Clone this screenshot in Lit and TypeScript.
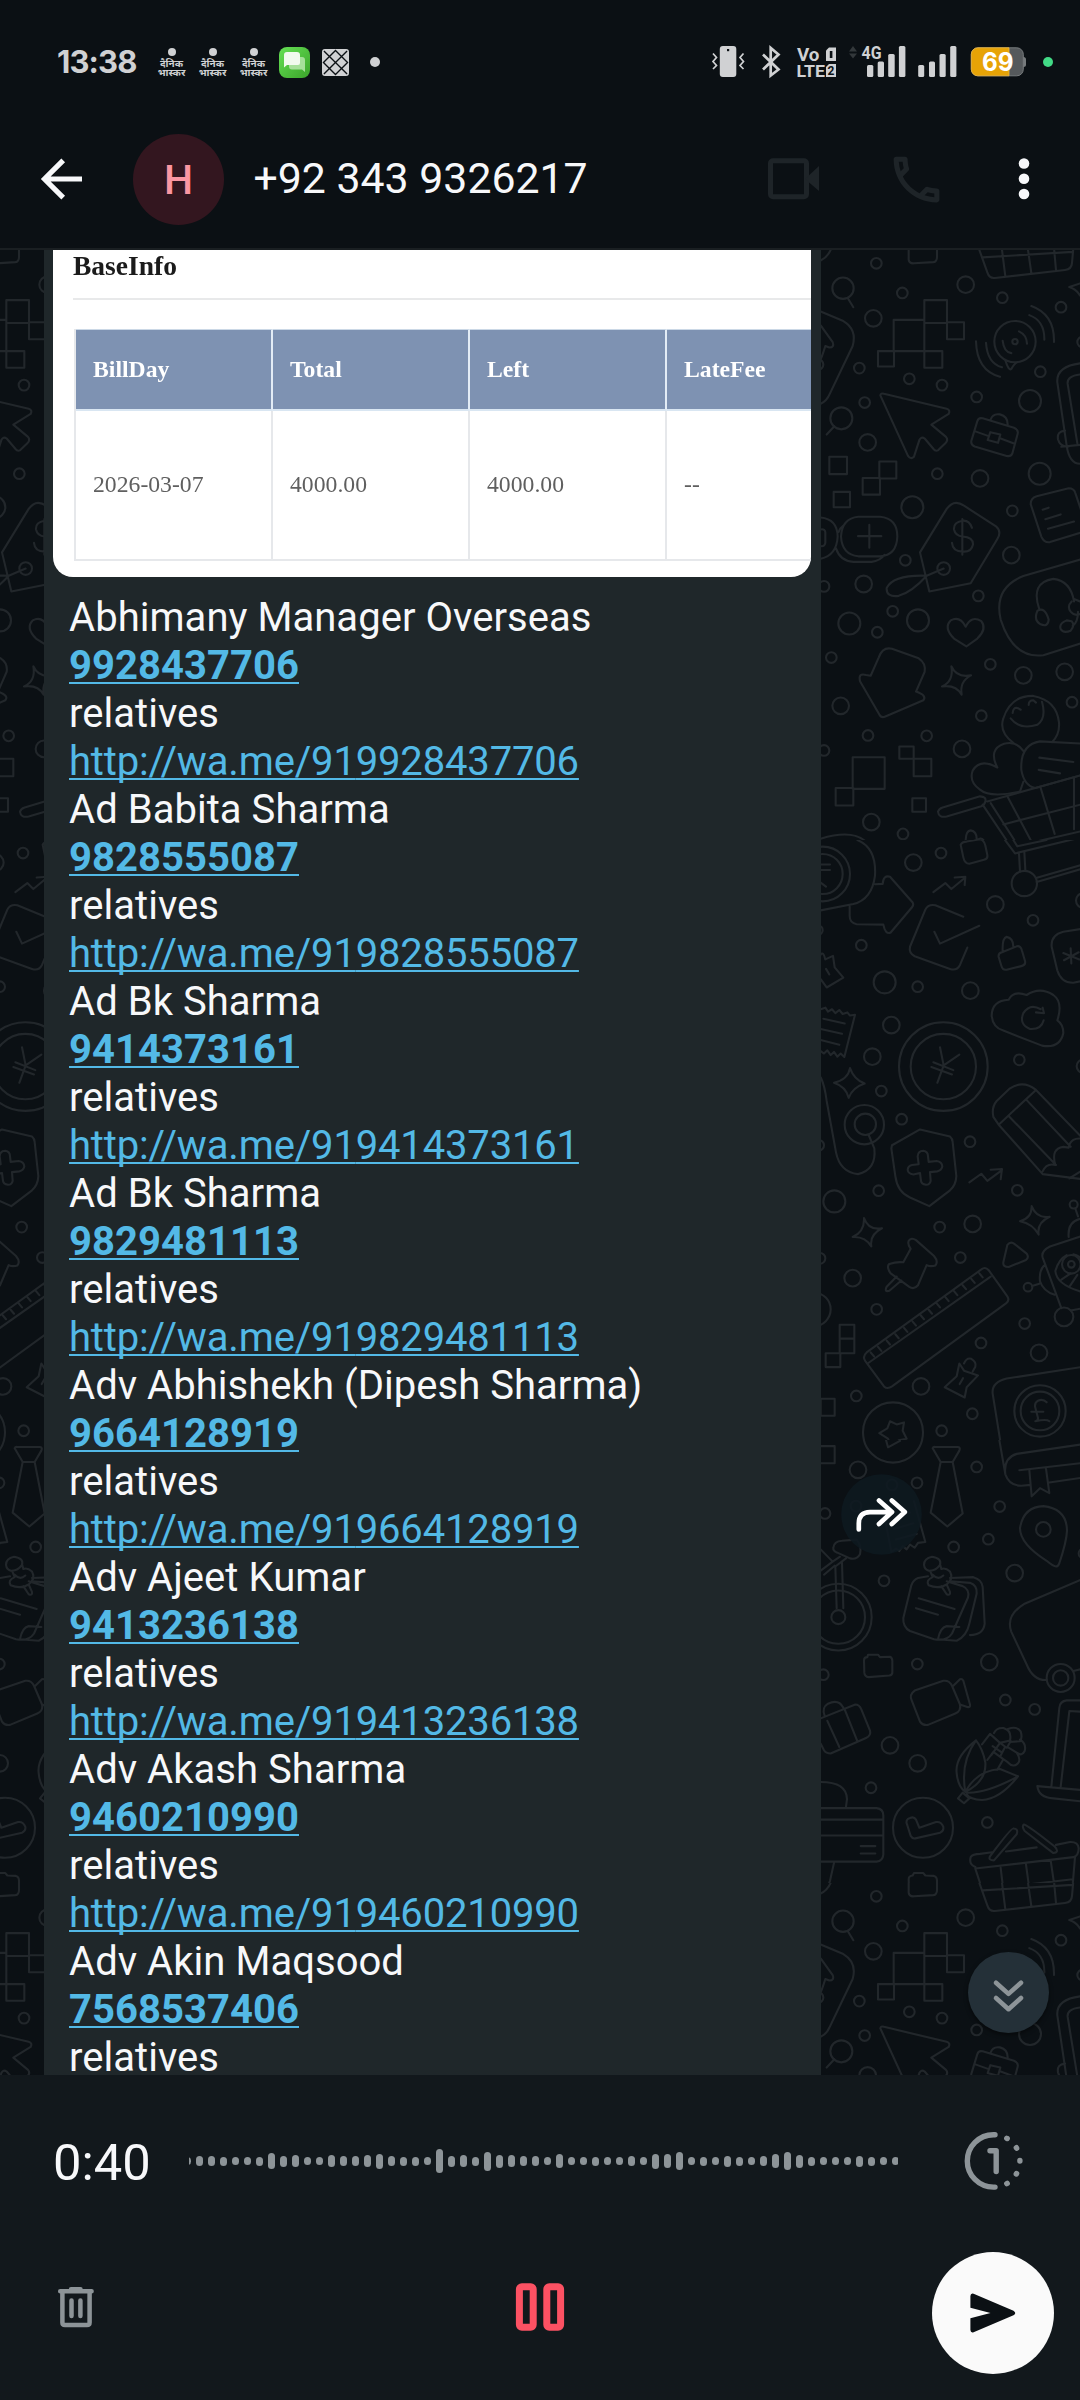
import { LitElement, html, css, svg } from "lit";
import { customElement } from "lit/decorators.js";

type Dot = [number, number, number];

/* ---------- wallpaper doodles: three bands of one repeating tile ---------- */

const TILE_W = 918;
const TILE_H = 1633;

const bandADots: Dot[] = [
  [229, 59, 16], [497, 113, 25], [307, 134, 16], [607, 146, 16], [220, 198, 25], [783, 170, 16],
  [178, 324, 16], [328, 351, 16], [426, 367, 16], [194, 411, 16], [203, 512, 25], [530, 397, 16],
  [721, 333, 16], [690, 407, 33], [719, 591, 33], [412, 591, 16], [540, 603, 25], [337, 676, 33],
  [637, 685, 16], [634, 797, 25], [316, 810, 16], [191, 870, 25], [72, 876, 16], [278, 939, 16],
  [354, 962, 33], [148, 970, 33], [232, 992, 16], [535, 900, 16], [94, 1056, 16], [571, 1073, 16],
  [670, 1101, 25], [794, 1092, 25], [122, 1178, 25], [816, 1169, 16], [544, 1203, 16], [204, 1253, 16],
  [380, 1254, 16], [486, 1287, 25], [72, 1291, 16], [214, 1472, 25], [309, 1502, 16], [848, 258, 16],
  [129, 122, 32], [124, 451, 33], [431, 831, 19], [645, 257, 62], [54, 315, 16], [645, 257, 8],
];

const bandAPaths = [
  "M144 148L160 170M103 471L80 492",
  "M62 52Q82 44 92 25M326 20V50Q328 60 342 59L400 56Q412 55 411 40V20",
  "M538 25L562 82Q568 98 585 96L795 76Q815 74 816 58L820 20M548 44L818 30M606 25L616 92M684 25L694 84M762 20L768 76",
  "M840 110L808 119Q828 124 840 140",
  "M281 202H373V281H281ZM373 152H441V210H373ZM441 208H492V251H441ZM234 281H282V320H234ZM373 281H427V323H373ZM373 210V281",
  "M62 181L130 205Q172 226 158 268L90 388Q80 408 62 414M62 216L98 258Q104 272 88 272L76 268Q68 290 62 302",
  "M528 256Q530 330 600 346M558 260Q562 312 606 322M608 255Q612 284 634 286M688 190Q734 204 733 252M694 167Q764 188 762 258M657 231Q680 240 681 262M616 304Q626 332 634 326Q645 310 652 309",
  "M241 393Q242 386 252 389L440 427Q452 430 446 440L394 467L438 498Q446 506 436 514L414 532Q406 535 400 528L374 502Q364 496 358 506L342 548Q332 556 324 546Z",
  "M532 458Q536 448 548 451L642 475Q656 480 653 490L637 540Q632 549 620 546L524 522Q512 518 514 508ZM526 484L566 496M602 502L640 514M571 486L601 492L594 513L563 506ZM572 454Q578 438 600 441Q624 446 623 468",
  "M840 312Q768 320 772 360L800 520Q808 566 840 566M840 340Q800 344 803 364L832 514M784 523L840 518M795 482Q770 484 774 504Q780 524 806 522",
  "M88 548H141V592H88ZM101 637H150V676H101ZM238 560H289V603H238ZM188 602H240V644H188Z",
  "M175 700H240Q292 704 292 750Q290 798 240 800H175Q126 796 123 750Q126 704 175 700ZM208 720V778M174 749H244M62 702Q112 706 113 750Q110 798 62 806M62 732Q76 730 76 740V766Q74 776 62 774M108 780Q120 812 160 814H215Q240 812 254 796M116 738Q120 728 130 722",
  "M440 680Q462 654 492 672L588 724Q606 738 592 756L512 868L388 889L360 790ZM431 831L380 849Q280 846 260 880Q258 904 296 900Q336 890 380 849M516 728Q508 708 487 710Q460 714 462 732Q466 748 488 750Q520 752 519 770Q514 790 488 788Q458 788 456 766M487 706V796",
  "M692 668Q692 652 710 648L806 628Q822 628 826 640L850 700M692 668L724 750Q732 766 750 764L850 738M728 682L746 677M736 706L782 694M744 730L822 712",
  "M850 806L670 850Q580 880 602 960Q640 1060 730 1050L850 1018M718 934Q690 866 760 857Q812 862 822 914M712 938Q734 926 746 960Q744 980 722 972Q700 962 712 938ZM815 914Q800 926 812 940Q824 952 840 946M822 908L840 914M800 962Q776 970 782 984Q790 996 812 988Q826 974 815 964ZM818 976Q834 966 834 940",
  "M497 978Q480 950 452 962Q430 980 462 1008L499 1028L532 1008Q562 984 544 964Q514 948 497 978Z",
  "M236 1056Q248 1028 276 1034L356 1058Q378 1070 374 1092L348 1142Q382 1152 370 1164L256 1205Q244 1210 238 1200L180 1116Q174 1094 198 1100L212 1102Z",
  "M454 1078Q470 1108 513 1101Q478 1116 485 1150Q468 1124 426 1129Q462 1116 454 1078Z",
  "M640 1272Q596 1244 610 1210Q632 1152 700 1153Q770 1164 777 1220Q780 1250 756 1270M638 1196Q640 1180 654 1184L662 1188M686 1176Q686 1164 700 1164L708 1170M632 1210Q660 1240 712 1226Q740 1210 726 1168",
  "M592 1334Q564 1288 612 1274Q648 1266 670 1292M592 1334Q540 1310 518 1342Q506 1370 540 1390Q570 1412 660 1395L670 1370M850 1274L720 1268Q660 1276 664 1340Q672 1380 706 1386L850 1352M718 1309L820 1320M716 1340L780 1349",
  "M428 1435L540 1407Q560 1408 556 1420Q554 1428 544 1432L440 1458Q416 1462 414 1446Q416 1438 428 1435ZM548 1428L645 1550M572 1424L654 1532L850 1494M562 1420L850 1352M624 1410L696 1524M722 1386L764 1502M822 1360V1490M610 1478L850 1426",
  "M298 1281H341V1312H298ZM341 1312H394V1356H341ZM158 1308H254V1388H158ZM107 1386H160V1430H107ZM337 1412H378V1446H337Z",
  "M62 1514Q180 1484 214 1540M490 1540Q480 1528 500 1526L540 1514Q552 1512 556 1530M497 1524Q496 1494 512 1493Q530 1496 530 1514",
];

const bandBDots: Dot[] = [
  [340, 57, 25], [423, 33, 16], [586, 163, 25], [699, 203, 16], [184, 266, 16], [254, 360, 33],
  [353, 371, 16], [511, 381, 25], [274, 468, 25], [217, 548, 25], [244, 635, 16], [658, 556, 16],
  [305, 706, 16], [510, 763, 16], [56, 772, 16], [236, 887, 16], [103, 914, 33], [652, 886, 16],
  [419, 979, 16], [518, 971, 25], [481, 1056, 16], [60, 1058, 16], [158, 1108, 25], [230, 1187, 16],
  [543, 1272, 16], [674, 1223, 16], [717, 1297, 25], [363, 1382, 25], [169, 1406, 16], [517, 1451, 16],
  [425, 1494, 16], [850, 153, 22], [54, 228, 14], [850, 572, 20],
  [430, 573, 133], [430, 573, 98], [673, 110, 38], [68, 86, 82], [68, 86, 60], [193, 720, 59],
  [196, 719, 32], [279, 1498, 90], [720, 1444, 77], [720, 1444, 58], [792, 1206, 28], [814, 1073, 28],
  [814, 1073, 10], [684, 1131, 13], [821, 922, 12], [42, 1187, 50],
];

const bandBPaths = [
  "M172 0Q230 20 225 90Q216 150 160 162L62 178M62 62H90M62 76H90M62 108L78 118M225 112L248 111Q250 88 270 93L338 158Q342 164 336 170L272 234Q256 240 250 214L170 213Q148 210 149 190V168",
  "M400 132L436 109L454 124L494 96M464 95L496 93L494 114",
  "M490 194L406 165Q384 162 376 176L330 270Q326 286 344 294L450 326Q470 332 480 316L502 272M403 232L420 262L538 217",
  "M482 12Q486 4 500 4L540 -2Q552 0 556 14L562 38Q564 48 552 50L508 60Q494 60 490 44Z",
  "M615 0L645 34L850 -8M640 0L652 16L740 0M657 34L660 80M673 30L676 76M708 96L850 62M710 106L850 72",
  "M596 296Q594 286 606 284L650 269Q662 266 666 280L675 306Q678 316 664 319L620 328Q608 330 604 318ZM608 282Q606 248 620 245Q640 248 640 270",
  "M850 224L790 232Q752 240 755 270L772 330Q784 362 820 361L850 356M812 274L814 312M790 286L838 302M792 304L836 284",
  "M62 290Q70 280 76 302L99 293L104 322L130 348L80 373L62 352M78 326L88 340",
  "M62 428L76 424L84 434L96 428L106 438L118 430L128 440L142 436L150 444L165 442L133 549L122 540L112 548L102 536L92 544L82 532L72 540L62 534M70 452L134 464M62 478L126 490M62 506L118 518",
  "M626 404Q576 406 575 444Q578 474 610 482L726 520Q780 528 790 488Q790 466 772 456Q790 410 760 392Q720 370 680 392Q640 380 626 404ZM722 428Q690 412 670 438Q656 466 690 478Q724 480 731 456M708 436L732 438L728 424",
  "M150 577Q162 606 194 616Q158 626 146 652Q138 624 102 614Q144 606 150 577Z",
  "M420 524L431 570L478 543M431 570L412 614M400 562L460 582M394 574L456 593",
  "M62 600Q74 620 80 660L108 790Q120 840 174 845Q230 834 223 780L206 746",
  "M276 772L360 732L450 750Q458 756 458 764L469 850Q468 872 450 886L388 926L330 904Q292 890 286 850L274 780ZM353 800Q354 786 370 786Q384 788 384 800L386 814L410 812Q426 814 427 826Q424 836 412 838L390 840L392 862Q390 872 378 872Q364 870 363 862L360 842L340 846Q324 844 323 834Q324 824 336 822L356 820Z",
  "M508 866L544 844L562 862L604 836M572 834L606 832L602 858",
  "M850 756L708 632Q670 606 630 628L590 660Q574 676 580 700L596 720L728 845L850 858M596 720L708 632M626 698L768 822M678 656L812 776M728 838Q740 816 766 822Q752 780 790 776L806 778Q812 750 850 756M808 856L850 834",
  "M695 926Q710 958 749 953Q710 968 716 998Q698 970 660 964Q696 956 695 926ZM192 956Q206 988 246 982Q208 998 214 1028Q196 1002 158 1004Q194 990 192 956Z",
  "M326 1014Q334 1004 348 1012L402 1052Q416 1066 406 1076Q392 1080 380 1075L354 1126Q342 1138 328 1130L272 1096Q258 1080 268 1072Q290 1066 310 1068L332 1034Q322 1022 326 1014ZM290 1104L260 1130Q252 1144 268 1140L304 1114",
  "M622 1024Q632 1014 644 1022L680 1046Q688 1056 678 1062L626 1080Q608 1080 610 1068Z",
  "M200 1296L544 1086Q556 1078 566 1088L622 1154Q630 1164 618 1172L276 1382Q262 1390 252 1382L196 1318Q186 1306 200 1296ZM206 1322L572 1104M212 1296L222 1306M234 1282L244 1292M260 1266L270 1276M286 1250L296 1260M312 1234L322 1244M338 1218L348 1228M362 1202L372 1212M386 1188L396 1198M410 1172L420 1182M436 1156L446 1166M462 1141L472 1151M488 1126L498 1136M514 1110L524 1120M538 1096L548 1106",
  "M119 1226H163V1298H119ZM119 1261H163M77 1298H121V1333H77ZM62 1413H104V1456H62ZM62 1532H104V1560H62Z",
  "M478 1324L492 1342L534 1354L500 1384L494 1410L434 1384L470 1356ZM492 1324Q500 1308 514 1312Q530 1320 526 1332L518 1344M489 1361L479 1376",
  "M850 1000L750 1028Q722 1040 728 1056L784 1184M812 1190L850 1184M806 1004Q802 966 840 958M826 932L834 952M736 1074Q716 1086 720 1116Q730 1142 764 1150M696 1128L718 1122M850 1144Q770 1126 766 1090Q776 1060 800 1050M850 1064Q836 1050 820 1048M784 1112L812 1096M808 1130L832 1100",
  "M270 1470L290 1478L312 1473L308 1494L320 1514L296 1518L276 1538L264 1514L238 1500L262 1488Z",
  "M850 1332L620 1362Q574 1372 578 1400L610 1568M740 1422Q728 1412 714 1418Q702 1424 706 1436L714 1462Q714 1470 706 1470Q740 1464 748 1470M694 1446H730",
  "M400 1536H478L446 1568M400 1536L430 1568",
];

const bandCDots: Dot[] = [
  [174, 73, 25], [75, 180, 16], [276, 110, 16], [168, 162, 16], [351, 105, 16], [530, 66, 16],
  [599, 163, 16], [565, 243, 16], [461, 262, 16], [644, 326, 25], [252, 345, 16], [352, 549, 16],
  [568, 544, 25], [616, 637, 16], [704, 660, 16], [270, 748, 25], [353, 792, 25], [213, 852, 16],
  [562, 937, 16], [70, 575, 16], [279, -18, 90], [730, 219, 22], [782, 583, 42], [782, 583, 23],
  [115, 434, 100], [115, 434, 80], [115, 434, 21], [369, 950, 90], [850, 278, 14],
];

const bandCPaths = [
  "M62 15H104V57H62M258 0L264 18L300 2",
  "M398 20Q400 16 406 17H474Q482 18 478 26L458 54H422ZM422 54L392 178L442 212L488 180L458 54",
  "M598 0L616 84Q628 112 664 112L692 110M748 104L850 92M850 10L650 34Q610 44 616 84M658 74L850 56M688 74L695 138L720 118L748 130L738 70",
  "M768 310Q760 310 740 296Q660 254 660 216Q670 164 730 162Q800 168 801 222Q800 248 778 302Q774 310 768 310Z",
  "M254 190L274 274L288 266L298 272L308 260L320 268L330 256L344 264L354 252L376 250L342 150M276 190L330 178M282 218L340 204M288 244L350 230",
  "M850 340L672 402Q616 430 634 470L680 550Q700 590 740 588M820 566L850 560",
  "M62 268L98 298L62 320M106 310L110 412M126 300L130 412M98 298L120 286M106 310L138 290M100 264Q102 248 126 247L170 244Q186 260 180 280Q170 294 150 290L112 276Q98 272 100 264ZM72 330L104 308",
  "M384 334L354 338Q340 342 334 356L310 436Q308 458 330 468L402 488Q440 494 456 474L504 386Q510 366 488 358L440 346M414 488Q420 460 440 456L478 458M450 346L510 350Q532 356 530 376L508 450Q500 480 470 492L412 488M450 338L520 336Q546 342 548 360L554 450Q550 478 510 478M356 388L464 414M348 412L414 428",
  "M372 306Q372 290 396 286Q426 290 420 306Q406 322 386 320Q374 318 372 306ZM390 320L398 336Q376 344 386 356Q416 366 440 354Q462 340 450 322Q436 312 424 316L420 304M398 330Q414 344 430 332M424 358L440 378Q452 382 450 372L440 354",
  "M192 540Q192 532 202 532L204 526H234L240 532L270 531Q278 534 277 544V568Q278 576 268 577L206 581Q194 580 193 570ZM326 1076Q326 1068 338 1067L342 1061H370L376 1067L402 1068Q411 1070 411 1080V1102Q410 1112 400 1112L342 1116Q328 1116 327 1106Z",
  "M336 640Q326 624 344 614L430 590Q448 588 456 602L480 648Q484 664 466 670L384 698Q368 700 360 690ZM460 602L480 586Q486 584 490 590L510 648Q512 656 502 654L480 648",
  "M62 682L166 648Q178 648 184 660L210 712Q214 724 198 730L92 768Q78 768 72 760L62 744M82 688L118 752M134 660L172 738M74 676Q64 656 84 646Q116 634 130 656",
  "M528 736Q464 776 470 816Q474 850 496 862Q560 836 556 790Q548 756 528 736ZM528 736Q480 790 496 862M496 862Q530 810 600 806L654 824Q600 880 546 882Q510 880 500 868M500 864Q560 866 654 824M488 864L508 878L492 890L474 878ZM546 746L570 720L600 742L574 772M582 718Q590 704 612 706Q636 712 630 736L600 742M624 708Q650 700 662 714Q668 730 660 738L630 740M660 734Q680 744 674 762Q666 776 650 766L622 752L632 738M650 766Q664 784 654 792Q640 804 624 790L600 776L614 754M562 784L580 764L610 782L592 808M578 750L606 766M600 742L620 754",
  "M62 838Q140 838 141 880L138 898M62 902H230Q250 904 250 920V1016Q248 1032 230 1033H62M62 930H250M62 969H250M182 995H226M182 1013H226M102 1036L90 1080Q82 1100 62 1110",
  "M322 944Q314 930 330 926Q342 922 348 930L358 950L408 936Q424 934 430 948Q432 958 420 962L346 976Q338 978 332 970Z",
  "M850 638H800Q780 640 778 656L754 850M850 666L808 664L782 850M712 848L850 858M712 848Q716 876 760 878L850 886",
  "M526 1046Q506 1040 512 1022Q518 1014 540 1014L576 1010M618 1008L710 998M768 992L810 985Q834 984 836 1000Q836 1018 820 1022L526 1050M526 1050L562 1140Q570 1152 590 1152L800 1130Q814 1128 816 1110L825 1022M570 1020Q564 1030 582 1030L650 966Q656 952 640 952Q634 950 570 1020ZM672 942Q684 944 764 996Q780 1010 760 1012L674 958Q664 946 672 942ZM548 1102L818 1076M602 1048L616 1144M678 1040L694 1136M752 1030L770 1130",
];

const band = (y: number, h: number, vy: number, sy: number, dots: Dot[], paths: string[]) => svg`
  <svg x="800" y=${y} width="280" height=${h} viewBox="0 ${vy} 840 ${h * sy}" preserveAspectRatio="none">
    ${dots.map(([cx, cy, r]) => svg`<ellipse class="ln" cx=${cx} cy=${cy} rx=${r} ry=${(r * sy) / 3}></ellipse>`)}
    ${paths.map((d) => svg`<path class="ln" d=${d}></path>`)}
  </svg>`;

const tile = (dx: number, dy: number) => svg`
  <g transform="translate(${dx} ${dy})">
    ${band(250, 590, 25.3, 2.529, bandADots, bandAPaths)}
    ${band(840, 600, 0, 2.529, bandBDots, bandBPaths)}
    ${band(1440, 443, 0, 2.45, bandCDots, bandCPaths)}
  </g>`;

@customElement("chat-wallpaper")
class ChatWallpaper extends LitElement {
  static styles = css`
    :host { display: block; width: 1080px; height: 1825px; }
    svg { display: block; }
    .ln { fill: none; stroke: #22272b; stroke-width: 2.1; stroke-linecap: round; stroke-linejoin: round; vector-effect: non-scaling-stroke; }
  `;
  render() {
    return html`<svg width="1080" height="1825" viewBox="0 250 1080 1825">
      ${tile(0, 0)}${tile(-TILE_W, 0)}${tile(0, TILE_H)}${tile(-TILE_W, TILE_H)}
    </svg>`;
  }
}

/* ------------------------------- status bar ------------------------------- */

@customElement("status-bar")
class StatusBar extends LitElement {
  static styles = css`
    :host { display: flex; align-items: center; box-sizing: border-box; height: 110px; padding: 14px 26px 0 57px; color: #d0d1d3; }
    svg { display: block; overflow: visible; }
    .time { font: 700 31px/36px Inter, Roboto, sans-serif; letter-spacing: -0.9px; width: 100px; }
    .news { display: flex; flex-direction: column; align-items: center; width: 41px; height: 34px; font: 700 10px/9px "Noto Sans", "Noto Sans Devanagari", sans-serif; white-space: nowrap; }
    .sun { width: 8px; height: 8px; border-radius: 50%; background: #d0d1d3; margin: 3px 0 3px; flex: none; }
    .apps { display: flex; margin-left: -6px; }
    .sms { margin-left: 5px; }
    .mesh { margin-left: 12px; }
    .more { width: 10px; height: 10px; border-radius: 50%; background: #d0d1d3; margin-left: 21px; }
    .right { margin-left: auto; }
    text { font-family: Roboto, sans-serif; font-weight: 700; }
    .num { font-family: Inter, sans-serif; }
  `;
  render() {
    return html`
      <div class="time">13:38</div>
      <div class="apps">
        ${[0, 1, 2].map(() => html`<div class="news"><span class="sun"></span><span>दैनिक</span><span>भास्कर</span></div>`)}
      </div>
      <svg class="sms" width="31" height="31" viewBox="0 0 31 31">
        <defs><linearGradient id="g" x1="0" y1="0" x2="1" y2="1"><stop offset="0" stop-color="#66e055"></stop><stop offset="1" stop-color="#3ba42a"></stop></linearGradient></defs>
        <rect width="31" height="31" rx="8" fill="url(#g)"></rect>
        <path d="M13 10h10q3 0 3 3v12l-3-2.500h-10q-3 0-3-3v-6.500q0-3 3-3z" fill="#a6e09a"></path>
        <path d="M8 5h10q3 0 3 3v8q0 2-2 2h-11l-3 2.500v-12.500q0-3 3-3z" fill="#f1faee"></path>
      </svg>
      <svg class="mesh" width="27" height="27" viewBox="0 0 28 28">
        <rect width="28" height="28" rx="3" fill="#d0d1d3"></rect>
        <path d="M2 2L26 26M26 2L2 26M14 1.500L26.500 14L14 26.500L1.500 14Z" stroke="#0b1014" stroke-width="1.400" fill="none"></path>
      </svg>
      <div class="more"></div>
      <svg class="right" width="342" height="36" viewBox="712 44 342 36" fill="#d0d1d3">
        <rect x="719.800" y="46" width="16.500" height="31" rx="3"></rect>
        <rect x="727" y="49" width="2.200" height="2.200" fill="#0b1014"></rect>
        <path d="M713 53.500l3.500 4-3.500 4 3.500 4-3.500 3.500M743.500 53.500l-3.500 4 3.500 4-3.500 4 3.500 3.500" fill="none" stroke="#d0d1d3" stroke-width="1.700"></path>
        <path d="M763 54.500L778.500 69.500L770.700 75.500V48L778.500 54.500L763 69.500" fill="none" stroke="#d0d1d3" stroke-width="2.700"></path>
        <text x="797" y="60.800" font-size="17.500" textLength="22.500" lengthAdjust="spacingAndGlyphs">Vo</text>
        <text x="796.500" y="76.800" font-size="17" textLength="28.500" lengthAdjust="spacingAndGlyphs">LTE</text>
        <path d="M829 47.500h7v13.500h-10v-10.500z"></path><rect x="829.800" y="51" width="2.600" height="7" fill="#0b1014"></rect>
        <path d="M829 64h7v13h-10v-10z"></path>
        <text x="827.500" y="75.300" font-size="12" fill="#0b1014">2</text>
        <path d="M849 51.500l4-5.500 4 5.500zM849 53.500h8l-4 5z" fill="#33383b"></path>
        <text x="861.500" y="58.800" font-size="18.500" textLength="20" lengthAdjust="spacingAndGlyphs">4G</text>
        <rect x="867" y="65" width="6.300" height="12" rx="1.500"></rect><rect x="877.700" y="61.500" width="6.300" height="15.500" rx="1.500"></rect>
        <rect x="888.200" y="54" width="6.500" height="23" rx="1.500"></rect><rect x="898.900" y="46" width="6.500" height="31" rx="1.500"></rect>
        <rect x="918.200" y="65" width="6" height="12" rx="1.500"></rect><rect x="929" y="61.500" width="6" height="15.500" rx="1.500"></rect>
        <rect x="939.500" y="54" width="6.200" height="23" rx="1.500"></rect><rect x="950.200" y="46" width="6.200" height="31" rx="1.500"></rect>
        <rect x="1020" y="57" width="6" height="10" rx="2.500" fill="#777b7d"></rect>
        <rect x="971.300" y="47.800" width="52" height="28" rx="6.500" fill="#55595c" stroke="#777b7d" stroke-width="1"></rect>
        <path d="M1009 47.800H977.800a6.500 6.500 0 0 0-6.500 6.500V69.300a6.500 6.500 0 0 0 6.500 6.500H1009z" fill="#e7a306" stroke="#edb841" stroke-width=".8"></path>
        <text class="num" x="982" y="71.200" font-size="25" fill="#fff" textLength="31.500" lengthAdjust="spacingAndGlyphs">69</text>
        <circle cx="1048" cy="62" r="5" fill="#42da86"></circle>
      </svg>`;
  }
}

/* ------------------------------- chat header ------------------------------ */

@customElement("chat-header")
class ChatHeader extends LitElement {
  static styles = css`
    :host { display: flex; align-items: center; box-sizing: border-box; height: 140px; padding: 0 47.500px 0 40px; border-bottom: 2px solid #1a1f22; color: #f7f8fa; }
    svg { display: block; flex: none; }
    .avatar { width: 91px; height: 91px; margin: 1px 0 0 49px; border-radius: 50%; background: #33161f; color: #fb96a2; display: flex; align-items: center; justify-content: center; font: 500 41px/48px Roboto, sans-serif; }
    .name { margin-left: 29.500px; font: 400 42.800px/50px Roboto, sans-serif; white-space: nowrap; flex: 1; margin-top: -2px; }
    .call { margin-left: 66.500px; }
    .menu { margin-left: 67.500px; }
  `;
  render() {
    return html`
      <svg width="44" height="44" viewBox="40 157 44 44" fill="none" stroke="#f7f8fa" stroke-width="5.200"><path d="M82 179H45M63.200 160.300L44.500 179L63.200 197.700"></path></svg>
      <div class="avatar">H</div>
      <div class="name">+92 343 9326217</div>
      <svg width="52" height="44" viewBox="768 157 52 44"><rect x="770.500" y="160.700" width="36" height="36" rx="2.500" fill="none" stroke="#1e2428" stroke-width="5"></rect><path d="M805 179L819 166V191Z" fill="#1e2428"></path></svg>
      <svg class="call" width="61" height="61" viewBox="0 0 24 24" fill="#1e2428"><path d="M6.540 5c.06.890.21 1.760.450 2.590l-1.200 1.200c-.410-1.200-.670-2.470-.760-3.790h1.510m9.860 12.020c.850.240 1.720.390 2.600.450v1.490c-1.320-.090-2.590-.350-3.800-.750l1.200-1.190M7.500 3H4c-.550 0-1 .450-1 1 0 9.390 7.610 17 17 17 .550 0 1-.450 1-1v-3.490c0-.550-.450-1-1-1-1.240 0-2.450-.200-3.570-.570-.100-.040-.210-.050-.310-.050-.260 0-.510.100-.710.290l-2.200 2.200c-2.830-1.450-5.150-3.760-6.590-6.590l2.200-2.200c.280-.280.360-.670.250-1.020C8.700 6.450 8.500 5.250 8.500 4c0-.550-.450-1-1-1z"></path></svg>
      <svg class="menu" width="18" height="44" viewBox="1014.500 157 18 44" fill="#f7f8fa"><circle cx="1023.500" cy="163.500" r="5.300"></circle><circle cx="1023.500" cy="178.700" r="5.300"></circle><circle cx="1023.500" cy="194" r="5.300"></circle></svg>`;
  }
}

/* --------------------------------- message -------------------------------- */

const contacts: [string, string, boolean][] = [
  ["Abhimany Manager Overseas", "9928437706", true],
  ["Ad Babita Sharma", "9828555087", true],
  ["Ad Bk Sharma", "9414373161", true],
  ["Ad Bk Sharma", "9829481113", true],
  ["Adv Abhishekh (Dipesh Sharma)", "9664128919", true],
  ["Adv Ajeet Kumar", "9413236138", true],
  ["Adv Akash Sharma", "9460210990", true],
  ["Adv Akin Maqsood", "7568537406", false],
];

@customElement("chat-message")
class ChatMessage extends LitElement {
  static styles = css`
    :host { display: block; box-sizing: border-box; width: 777px; height: 1825px; overflow: hidden; background: #1f272a; padding: 0 10px 0 9px; }
    .shot { box-sizing: border-box; height: 327px; overflow: hidden; background: #fff; border-radius: 0 0 20px 20px; padding-left: 20px; font-family: "Liberation Serif", serif; }
    .title { height: 48px; border-bottom: 2px solid #e8e9ea; color: #1b1b1b; font-weight: 700; font-size: 27.500px; line-height: 31px; }
    .title span, .cell span { filter: blur(0.7px); display: inline-block; }
    .grid { display: grid; grid-template-columns: repeat(4, 197px); grid-template-rows: 82px 150px; margin: 29px 0 0 1px; width: 790px; border-left: 2px solid #e6e8eb; font-size: 23.700px; }
    .cell { box-sizing: border-box; display: flex; align-items: center; padding: 0 0 2px 17px; border-right: 2px solid #e6e8eb; border-bottom: 2px solid #e6e8eb; color: #5f5f5f; }
    .head { background: #7e92b2; color: #fff; font-weight: 700; border-right-color: #e3ecf5; border-top: 1px solid #cbd8e6; border-bottom: 2px solid #d9e6f2; padding-bottom: 1px; }
    .body { padding: 17px 0 0 16px; color: #f7f8fa; font: 400 40px/48px Roboto, sans-serif; white-space: nowrap; }
    .line { height: 48px; letter-spacing: 0.040px; }
    .link { color: #53b9e6; text-decoration: underline; text-decoration-thickness: 2px; text-underline-offset: 3px; text-decoration-skip-ink: none; letter-spacing: -0.160px; }
    .bold { font-weight: 700; letter-spacing: 0.050px; }
  `;
  render() {
    return html`
      <div class="shot">
        <div class="title"><span>BaseInfo</span></div>
        <div class="grid">
          ${["BillDay", "Total", "Left", "LateFee"].map((t) => html`<div class="cell head"><span>${t}</span></div>`)}
          ${["2026-03-07", "4000.00", "4000.00", "--"].map((t) => html`<div class="cell"><span>${t}</span></div>`)}
        </div>
      </div>
      <div class="body">
        ${contacts.map(([name, phone, chatLink]) => html`
          <div class="line">${name}</div>
          <div class="line"><span class="link bold">${phone}</span></div>
          <div class="line">relatives</div>
          ${chatLink ? html`<div class="line"><span class="link">http://wa.me/91${phone}</span></div>` : null}`)}
      </div>`;
  }
}

/* ----------------------------- voice recorder ----------------------------- */

const levels = [
  8, 10, 10, 9, 8, 8, 9, 16, 11, 12, 8, 8, 12, 10, 10, 12, 15, 10, 9, 9, 8, 24, 11, 12, 9, 19, 13, 12, 10, 10,
  8, 14, 8, 8, 9, 8, 8, 10, 8, 15, 14, 18, 8, 9, 8, 11, 9, 8, 10, 14, 18, 13, 9, 8, 8, 8, 11, 9, 8, 8,
];

@customElement("voice-recorder")
class VoiceRecorder extends LitElement {
  static styles = css`
    :host { display: block; height: 325px; background: #12181c; }
    svg { display: block; }
    .top { display: flex; align-items: center; height: 172px; padding: 0 55px 0 53px; }
    .time { font: 400 50.700px/58px Roboto, sans-serif; color: #f7f8fa; width: 136px; padding-top: 4px; }
    .wave { display: flex; align-items: center; gap: 5px; width: 709px; height: 40px; overflow: hidden; }
    .bar { flex: none; width: 7px; border-radius: 4px; background: #8d9498; }
    .bar:first-child { margin-left: -5px; }
    .once { margin-left: auto; }
    .controls { display: grid; grid-template-columns: 1fr 50px 1fr; align-items: center; height: 128px; padding: 0 26px 0 57px; }
    .trash, .pause { margin-bottom: 9px; }
    .pause { margin-left: -15.500px; }
    .send { display: flex; align-items: center; justify-content: center; justify-self: end; width: 122px; height: 122px; border-radius: 50%; background: #fafafa; margin-top: 4px; }
  `;
  render() {
    return html`
      <div class="top">
        <div class="time">0:40</div>
        <div class="wave">${levels.map((h) => html`<span class="bar" style="height:${h}px"></span>`)}</div>
        <svg class="once" width="62" height="62" viewBox="963 2130 62 62" fill="none" stroke="#8d9498" stroke-width="5.400" stroke-linecap="round">
          <path d="M995 2134.700H993.500a26.200 26.200 0 0 0 0 52.400H995"></path>
          <path d="M1006.800 2138.300l.4.200M1016.300 2147.700l.3.500M1019.900 2160.500v.6M1016.600 2173.500l-.3.500M1007.200 2183.400l-.4.200"></path>
          <path d="M990 2150.700H996.200V2171.500" stroke-linejoin="round"></path>
        </svg>
      </div>
      <div class="controls">
        <svg class="trash" width="38" height="42" viewBox="57 2286 38 42" fill="none" stroke="#8d9498" stroke-width="4.500" stroke-linecap="round">
          <path d="M60.200 2291.200H91.600M71 2289.300H80.500"></path>
          <path d="M62.400 2292V2322.500Q62.400 2325 65 2325H87Q89.600 2325 89.600 2322.500V2292"></path>
          <path d="M71.500 2300.500V2316M80.400 2300.500V2316"></path>
        </svg>
        <svg class="pause" width="50" height="48" viewBox="515 2283 50 48" fill="none" stroke="#fc5163" stroke-width="7">
          <rect x="519.400" y="2286.800" width="13.800" height="40.400" rx="2.500"></rect><rect x="546.800" y="2286.800" width="13.800" height="40.400" rx="2.500"></rect>
        </svg>
        <div class="send"><svg width="46" height="40" viewBox="970 2293.500 46 40">
          <path d="M970.400 2296.500Q970.600 2293.300 973.600 2294.200L1013.500 2311.200Q1017 2313.500 1013.500 2315.800L973.600 2332.800Q970.600 2333.700 970.400 2330.500V2318.800L990.500 2313.500L970.400 2308.200Z" fill="#0b1014"></path>
        </svg></div>
      </div>`;
  }
}

@customElement("app-root")
class AppRoot extends LitElement {
  static styles = css`
    :host { display: flex; flex-direction: column; width: 1080px; height: 2400px; overflow: hidden; background: #0b1014; font-family: Roboto, sans-serif; }
    .chat { position: relative; height: 1825px; overflow: hidden; padding-left: 44px; }
    .paper { position: absolute; left: 0; top: 0; }
    .msg { position: relative; }
    .forward, .jump { position: absolute; display: block; overflow: visible; }
    .forward { left: 840.500px; top: 1224px; }
    .jump { left: 968px; top: 1702px; filter: drop-shadow(0 2px 2px rgba(0, 0, 0, 0.5)); }
  `;
  render() {
    return html`
      <status-bar></status-bar>
      <chat-header></chat-header>
      <div class="chat">
        <chat-wallpaper class="paper"></chat-wallpaper>
        <chat-message class="msg"></chat-message>
        <svg class="forward" width="81" height="81" viewBox="-40.500 -40.500 81 81">
          <circle r="40.300" fill="#0e1920" fill-opacity=".88"></circle>
          <path d="M-22.700 15V9Q-22.700-2.400-11.500-2.400H10M-2.500-14L10.500-2.400L-2.500 9.600M10.300-14L23.300-2.400L10.300 9.600" fill="none" stroke="#fff" stroke-width="4.700" stroke-linecap="round" stroke-linejoin="round"></path>
        </svg>
        <svg class="jump" width="81" height="81" viewBox="-40.500 -40.500 81 81">
          <circle r="40.500" fill="#243038"></circle>
          <path d="M-12.500-9.800L0 1.400L12.500-9.800M-12.500 5.500L0 16.700L12.500 5.500" fill="none" stroke="#8d9498" stroke-width="4.600" stroke-linecap="round" stroke-linejoin="round"></path>
        </svg>
      </div>
      <voice-recorder></voice-recorder>`;
  }
}
